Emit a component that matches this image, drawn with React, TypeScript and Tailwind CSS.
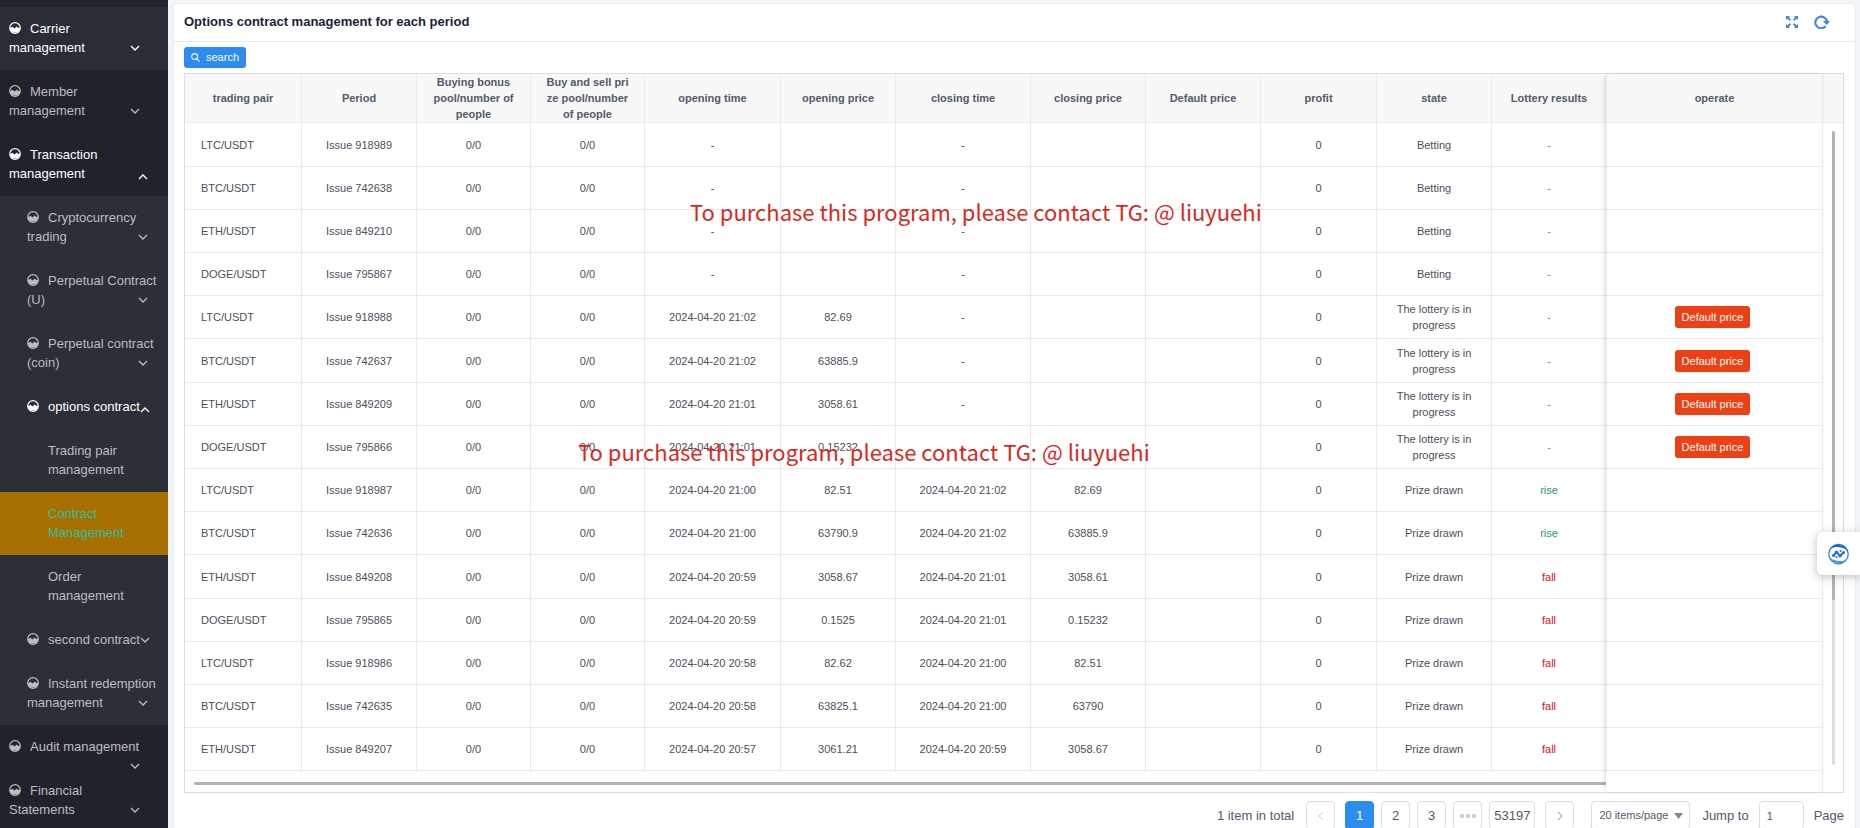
import React from "react";

type MenuItem = {
  lines: string[];
  level: 1 | 2 | 3;
  active?: boolean;
  open?: boolean;
  selected?: boolean;
  arrow?: string;
};

const topItems: MenuItem[] = [
  { lines: ["Carrier", "management"], level: 1, active: true, arrow: "right-7 bottom-[15px]" },
  { lines: ["Member", "management"], level: 1, arrow: "right-7 bottom-[15px]" },
  { lines: ["Transaction", "management"], level: 1, active: true, open: true, arrow: "right-5 bottom-3" },
];

const subItems: MenuItem[] = [
  { lines: ["Cryptocurrency", "trading"], level: 2, arrow: "right-5 bottom-[15px]" },
  { lines: ["Perpetual Contract", "(U)"], level: 2, arrow: "right-5 bottom-[15px]" },
  { lines: ["Perpetual contract", "(coin)"], level: 2, arrow: "right-5 bottom-[15px]" },
  { lines: ["options contract"], level: 2, active: true, open: true, arrow: "right-[18px] bottom-3" },
  { lines: ["Trading pair", "management"], level: 3 },
  { lines: ["Contract", "Management"], level: 3, selected: true },
  { lines: ["Order", "management"], level: 3 },
  { lines: ["second contract"], level: 2, arrow: "right-[18px] bottom-[15px]" },
  { lines: ["Instant redemption", "management"], level: 2, arrow: "right-5 bottom-[15px]" },
];

const bottomItems: MenuItem[] = [
  { lines: ["Audit management"], level: 1, arrow: "right-7 -bottom-1" },
  { lines: ["Financial", "Statements"], level: 1, arrow: "right-7 bottom-[15px]" },
];

const columns: { label: React.ReactNode; width: number }[] = [
  { label: "trading pair", width: 117 },
  { label: "Period", width: 115 },
  { label: <>Buying bonus<br />pool/number of<br />people</>, width: 114 },
  { label: <>Buy and sell pri<br />ze pool/number<br />of people</>, width: 114 },
  { label: "opening time", width: 136 },
  { label: "opening price", width: 115 },
  { label: "closing time", width: 135 },
  { label: "closing price", width: 115 },
  { label: "Default price", width: 115 },
  { label: "profit", width: 116 },
  { label: "state", width: 115 },
  { label: "Lottery results", width: 115 },
  { label: "operate", width: 216 },
];
const totalWidth = columns.reduce((sum, c) => sum + c.width, 0);

type Row = [pair: string, issue: string, openTime: string, openPrice: string, closeTime: string, closePrice: string, state: string, result: string];

const drawing = "The lottery is in progress";
const rows: Row[] = [
  ["LTC/USDT", "918989", "-", "", "-", "", "Betting", "-"],
  ["BTC/USDT", "742638", "-", "", "-", "", "Betting", "-"],
  ["ETH/USDT", "849210", "-", "", "-", "", "Betting", "-"],
  ["DOGE/USDT", "795867", "-", "", "-", "", "Betting", "-"],
  ["LTC/USDT", "918988", "2024-04-20 21:02", "82.69", "-", "", drawing, "-"],
  ["BTC/USDT", "742637", "2024-04-20 21:02", "63885.9", "-", "", drawing, "-"],
  ["ETH/USDT", "849209", "2024-04-20 21:01", "3058.61", "-", "", drawing, "-"],
  ["DOGE/USDT", "795866", "2024-04-20 21:01", "0.15232", "-", "", drawing, "-"],
  ["LTC/USDT", "918987", "2024-04-20 21:00", "82.51", "2024-04-20 21:02", "82.69", "Prize drawn", "rise"],
  ["BTC/USDT", "742636", "2024-04-20 21:00", "63790.9", "2024-04-20 21:02", "63885.9", "Prize drawn", "rise"],
  ["ETH/USDT", "849208", "2024-04-20 20:59", "3058.67", "2024-04-20 21:01", "3058.61", "Prize drawn", "fall"],
  ["DOGE/USDT", "795865", "2024-04-20 20:59", "0.1525", "2024-04-20 21:01", "0.15232", "Prize drawn", "fall"],
  ["LTC/USDT", "918986", "2024-04-20 20:58", "82.62", "2024-04-20 21:00", "82.51", "Prize drawn", "fall"],
  ["BTC/USDT", "742635", "2024-04-20 20:58", "63825.1", "2024-04-20 21:00", "63790", "Prize drawn", "fall"],
  ["ETH/USDT", "849207", "2024-04-20 20:57", "3061.21", "2024-04-20 20:59", "3058.67", "Prize drawn", "fall"],
];

const resultColor: Record<string, string> = {
  "-": "text-[#808695]",
  rise: "text-[#19a15f]",
  fall: "text-[#e01515]",
};

function GaugeIcon() {
  return (
    <svg viewBox="0 0 24 24" className="mr-[9px] inline-block size-3 align-[-1px]" aria-hidden="true">
      <circle cx="12" cy="12" r="10.6" fill="none" stroke="currentColor" strokeWidth="2.4" />
      <path d="M1.5 12.5 L7 9.5 L11 13 L15.5 9 L18.5 12 L22.5 11 A10.6 10.6 0 0 1 1.5 12.5 Z" fill="currentColor" />
    </svg>
  );
}

function Chevron({ className, d }: { className: string; d: string }) {
  return (
    <svg viewBox="0 0 10 6" className={className} fill="none" stroke="currentColor" strokeWidth="1.3" aria-hidden="true">
      <path d={d} />
    </svg>
  );
}

function MenuEntry({ item, className = "" }: { item: MenuItem; className?: string }) {
  const pad = item.level === 1 ? "pl-[9px]" : item.level === 2 ? "pl-[27px]" : "pl-12";
  const tone = item.selected ? "bg-[#a87000] text-[#2dbfa5]" : item.active ? "text-white" : "text-[#bcbdc0]";
  const content = (
    <>
      {item.level < 3 && <GaugeIcon />}
      {item.lines.map((line, i) => (
        <React.Fragment key={line}>
          {i > 0 && <br />}
          {line}
        </React.Fragment>
      ))}
      {item.arrow && (
        <span className={`absolute ${item.arrow} flex h-[14px] items-center`}>
          <Chevron className="h-1.5 w-2.5" d={item.open ? "M1 5 L5 1 L9 5" : "M1 1 L5 5 L9 1"} />
        </span>
      )}
    </>
  );
  const classes = `relative block w-full pt-3 pb-[13px] text-left text-[13px] leading-[19px] whitespace-nowrap ${pad} ${tone} ${className}`;
  return item.level === 3 ? (
    <li><a href="#" className={classes}>{content}</a></li>
  ) : (
    <li><button type="button" className={classes}>{content}</button></li>
  );
}

function Sidebar() {
  return (
    <nav className="w-[168px] shrink-0 overflow-hidden bg-[#20232c] pt-[7px]">
      <ul>
        {topItems.map((item, i) => (
          <MenuEntry key={i} item={item} className={i === 0 ? "bg-[#2a2d35]" : ""} />
        ))}
      </ul>
      <ul className="bg-[#2b2f37]">
        {subItems.map((item, i) => (
          <MenuEntry key={i} item={item} />
        ))}
      </ul>
      <ul>
        {bottomItems.map((item, i) => (
          <MenuEntry key={i} item={item} />
        ))}
      </ul>
    </nav>
  );
}

function ContractTable() {
  return (
    <div className="relative mt-[5px] border border-[#dcdee2]">
      <div className="flex">
        <table className="min-w-0 flex-1 table-fixed border-separate border-spacing-0 text-center text-[11px] leading-4 text-[#495060]">
          <colgroup>
            {columns.map((c, i) => (
              <col key={i} style={{ width: `${(c.width / totalWidth) * 100}%` }} />
            ))}
          </colgroup>
          <thead>
            <tr>
              {columns.map((c, i) => (
                <th key={i} scope="col" className="h-[49px] border-r border-b border-[#e8eaec] bg-[#f8f8f9] p-0 font-bold text-[#515a6e]">
                  {c.label}
                </th>
              ))}
            </tr>
          </thead>
          <tbody>
            {rows.map(([pair, issue, openTime, openPrice, closeTime, closePrice, state, result], r) => {
              const cells: React.ReactNode[] = [
                pair,
                `Issue ${issue}`,
                "0/0",
                "0/0",
                openTime,
                openPrice,
                closeTime,
                closePrice,
                "",
                "0",
                state,
                <span className={resultColor[result]}>{result}</span>,
                state === drawing ? (
                  <button type="button" className="mr-1 h-[22px] rounded-[3px] bg-[#ed4014] px-[7px] text-white">
                    Default price
                  </button>
                ) : (
                  ""
                ),
              ];
              return (
                <tr key={r}>
                  {cells.map((cell, c) => (
                    <td
                      key={c}
                      className={`border-r border-b border-[#e8eaec] py-0 ${r % 5 === 0 ? "h-11" : "h-[43px]"} ${
                        c === 0 ? "pl-4 text-left" : c === 10 ? "px-4" : "px-0"
                      }`}
                    >
                      {cell}
                    </td>
                  ))}
                </tr>
              );
            })}
            <tr aria-hidden="true">
              {columns.map((_, i) => (
                <td key={i} className="h-0.5 border-r border-[#e8eaec] p-0" />
              ))}
            </tr>
          </tbody>
        </table>
        <div className="flex w-5 shrink-0 flex-col">
          <div className="h-[49px] border-b border-[#e8eaec] bg-[#f8f8f9]" />
          <div className="mx-auto mt-2 mb-2 w-[3px] flex-1 rounded bg-[#dddddd]">
            <div className="h-[74%] rounded bg-[#b3b3b3]" />
          </div>
        </div>
      </div>
      <div className="flex h-[19px] pt-[9px]">
        <div className="ml-[9px] h-[3px] flex-1 rounded-l bg-[#b3b3b3]" />
        <div className="w-[237px]" />
      </div>
      <div className="pointer-events-none absolute inset-y-0 right-5 w-[217px] border-r border-[#e8eaec] shadow-[-2px_0_6px_-2px_rgba(0,0,0,0.2)]" />
    </div>
  );
}

const pageButton = "h-[29px] min-w-[29px] rounded-[4px] border border-[#dcdee2] bg-white text-center";

function Pagination() {
  return (
    <div className="mt-2 flex items-center justify-end text-[13px] text-[#515a6e]">
      <span className="mr-3">1 item in total</span>
      <button type="button" aria-label="Previous page" className={`${pageButton} mr-2.5 flex items-center justify-center text-[#c5c8ce]`}>
        <svg viewBox="0 0 6 10" className="h-2.5 w-1.5" fill="none" stroke="currentColor"><path d="M5 1 L1 5 L5 9" /></svg>
      </button>
      <div className="flex gap-[7px]">
        <button type="button" className="h-[29px] min-w-[29px] rounded-[4px] border border-[#2d8cf0] bg-[#2d8cf0] text-center text-white">1</button>
        <button type="button" className={pageButton}>2</button>
        <button type="button" className={pageButton}>3</button>
        <button type="button" aria-label="Next 5 pages" className={`${pageButton} flex items-center justify-center gap-0.5`}>
          <span className="size-1 rounded-full bg-[#c5c8ce]" />
          <span className="size-1 rounded-full bg-[#c5c8ce]" />
          <span className="size-1 rounded-full bg-[#c5c8ce]" />
        </button>
        <button type="button" className={`${pageButton} px-1`}>53197</button>
      </div>
      <button type="button" aria-label="Next page" className={`${pageButton} ml-2.5 flex items-center justify-center text-[#808695]`}>
        <svg viewBox="0 0 6 10" className="h-2.5 w-1.5" fill="none" stroke="currentColor"><path d="M1 1 L5 5 L1 9" /></svg>
      </button>
      <div className="relative ml-[17px] flex items-center">
        <select aria-label="Items per page" className="h-[29px] w-[99px] appearance-none rounded-[4px] border border-[#dcdee2] bg-white pl-[7px] text-[11px]">
          <option>20 items/page</option>
        </select>
        <svg viewBox="0 0 9 6" className="pointer-events-none absolute right-[7px] h-1.5 w-[9px]" fill="#808695" aria-hidden="true"><path d="M0 0 H9 L4.5 6 Z" /></svg>
      </div>
      <label className="ml-3 flex items-center">
        Jump to
        <input defaultValue="1" className="mx-2.5 h-[29px] w-[45px] rounded-[4px] border border-[#dcdee2] pl-[7px] text-[11px]" />
        Page
      </label>
    </div>
  );
}

const notice = "To purchase this program, please contact TG: @ liuyuehi";

export default function App() {
  return (
    <div className="relative flex h-screen overflow-hidden bg-[#f1f4f9] font-['Liberation_Sans',Arial,sans-serif]">
      <Sidebar />
      <main className="min-w-0 flex-1 pt-[3px] pr-1 pl-[5px]">
        <section className="min-h-full rounded-[4px] border border-[#e8eaec] bg-white">
          <header className="flex h-[38px] items-center justify-between border-b border-[#e8eaec] pr-[25px] pb-0.5 pl-2.5">
            <h1 className="text-[13px] leading-5 font-bold text-[#17233d]">Options contract management for each period</h1>
            <div className="flex items-center gap-4 text-[#3d86dc]">
              <button type="button" aria-label="Full screen">
                <svg viewBox="0 0 12 12" className="size-3" fill="currentColor">
                  <path d="M0 0 H4 L2.8 1.2 L5 3.6 L3.8 4.8 L1.3 2.7 L0 4 Z" />
                  <path d="M12 0 V4 L10.7 2.7 L8.2 4.8 L7 3.6 L9.2 1.2 L8 0 Z" />
                  <path d="M0 12 V8 L1.3 9.3 L3.8 7.2 L5 8.4 L2.8 10.8 L4 12 Z" />
                  <path d="M12 12 H8 L9.2 10.8 L7 8.4 L8.2 7.2 L10.7 9.3 L12 8 Z" />
                </svg>
              </button>
              <button type="button" aria-label="Refresh">
                <svg viewBox="0 0 16 14" className="h-3.5 w-4">
                  <path d="M11.6 11.2 A5.8 5.8 0 1 1 12.9 6.6" fill="none" stroke="currentColor" strokeWidth="2.1" />
                  <path d="M9 6 H16 L12.7 9.9 Z" fill="currentColor" />
                </svg>
              </button>
            </div>
          </header>
          <div className="pt-[5px] pr-[11px] pl-2.5">
            <button type="button" className="flex h-[21px] items-center gap-1.5 rounded-[3px] bg-[#2d8cf0] px-[7px] text-[11px] text-white">
              <svg viewBox="0 0 10 10" className="size-[9px]" fill="none" stroke="currentColor" strokeWidth="1.2" aria-hidden="true">
                <circle cx="4" cy="4" r="3.3" />
                <path d="M6.4 6.4 L9.6 9.6" />
              </svg>
              search
            </button>
            <ContractTable />
            <Pagination />
          </div>
        </section>
      </main>

      <p className="pointer-events-none absolute top-[195px] left-[690px] font-['Noto_Sans_CJK_SC',sans-serif] text-[22px] leading-8 whitespace-nowrap text-[#e0261c]">{notice}</p>
      <p className="pointer-events-none absolute top-[435px] left-[578px] font-['Noto_Sans_CJK_SC',sans-serif] text-[22px] leading-8 whitespace-nowrap text-[#e0261c]">{notice}</p>

      <button type="button" aria-label="Assistant" className="absolute top-[532px] right-0 flex h-[43px] w-[43px] items-center rounded-l-md bg-white pl-[11px] shadow-[0_2px_10px_rgba(0,0,0,0.25)]">
        <svg viewBox="0 0 42 44" className="h-[22px] w-[21px]" aria-hidden="true">
          <circle cx="21" cy="22" r="19.5" fill="white" stroke="#2f7de0" strokeWidth="2.5" />
          <path d="M3 15 A19.5 19.5 0 0 1 40 20 C36 9 28 10 20 8 C12 7 7 10 3 15 Z" fill="#1d62d2" />
          <path d="M2 24 C6 35 14 34 22 36 C30 37 35 35 39 29 A19.5 19.5 0 0 1 2 24 Z" fill="#4a94ec" />
          <path d="M11 25 L17 18 L24 26 L31 19" fill="none" stroke="#1f6bd6" strokeWidth="4" strokeLinejoin="round" />
          <g fill="#1f6bd6">
            <circle cx="11" cy="25" r="3" />
            <circle cx="17" cy="18" r="3" />
            <circle cx="24" cy="26" r="3" />
            <circle cx="31" cy="19" r="3" />
            <circle cx="25" cy="16" r="2" />
            <circle cx="17" cy="28" r="2" />
          </g>
        </svg>
      </button>
    </div>
  );
}
